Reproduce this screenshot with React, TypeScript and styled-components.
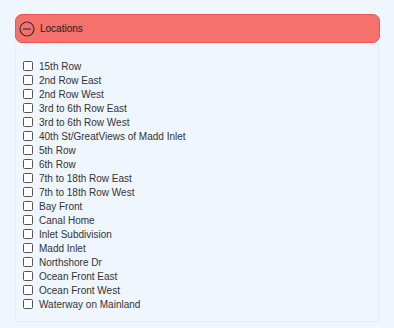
import styled, { createGlobalStyle } from 'styled-components';

const locations = [
  '15th Row',
  '2nd Row East',
  '2nd Row West',
  '3rd to 6th Row East',
  '3rd to 6th Row West',
  '40th St/GreatViews of Madd Inlet',
  '5th Row',
  '6th Row',
  '7th to 18th Row East',
  '7th to 18th Row West',
  'Bay Front',
  'Canal Home',
  'Inlet Subdivision',
  'Madd Inlet',
  'Northshore Dr',
  'Ocean Front East',
  'Ocean Front West',
  'Waterway on Mainland',
];

const GlobalStyle = createGlobalStyle`
  html, body {
    margin: 0;
    background: #eff6fe;
    font-family: 'Liberation Sans', Arial, sans-serif;
  }
`;

const Page = styled.div`
  padding: 14px 14px 0 15px;
`;

const Header = styled.div`
  display: flex;
  align-items: center;
  gap: 5px;
  height: 27px;
  padding: 0 3px;
  background: #f4726b;
  border: 1px solid #ee5550;
  border-radius: 7px;
  font-size: 10px;
  color: #1b1b1b;
`;

const Panel = styled.div`
  margin-right: 1px;
  height: 279px;
  padding: 16px 0 0 7px;
  box-sizing: border-box;
  border: 1px solid #e6ecf3;
  border-top: none;
`;

const List = styled.ul`
  list-style: none;
  margin: 0;
  padding: 0;
  display: flex;
  flex-direction: column;
`;

const Item = styled.li`
  display: flex;
  align-items: center;
  gap: 6px;
  height: 14px;
  font-size: 10px;
  color: #333;
`;

const Box = styled.span`
  width: 8px;
  height: 8px;
  border: 1px solid #555;
  border-radius: 1.5px;
  background: #fff;
`;

export default function App() {
  return (
    <>
      <GlobalStyle />
      <Page>
        <Header>
          <svg width="16" height="16" viewBox="0 0 16 16">
            <circle cx="8" cy="8" r="7" fill="none" stroke="#333" strokeWidth="1.2" />
            <line x1="4" y1="8" x2="12" y2="8" stroke="#333" strokeWidth="1.2" />
          </svg>
          Locations
        </Header>
        <Panel>
          <List>
            {locations.map((l) => (
              <Item key={l}>
                <Box />
                {l}
              </Item>
            ))}
          </List>
        </Panel>
      </Page>
    </>
  );
}
